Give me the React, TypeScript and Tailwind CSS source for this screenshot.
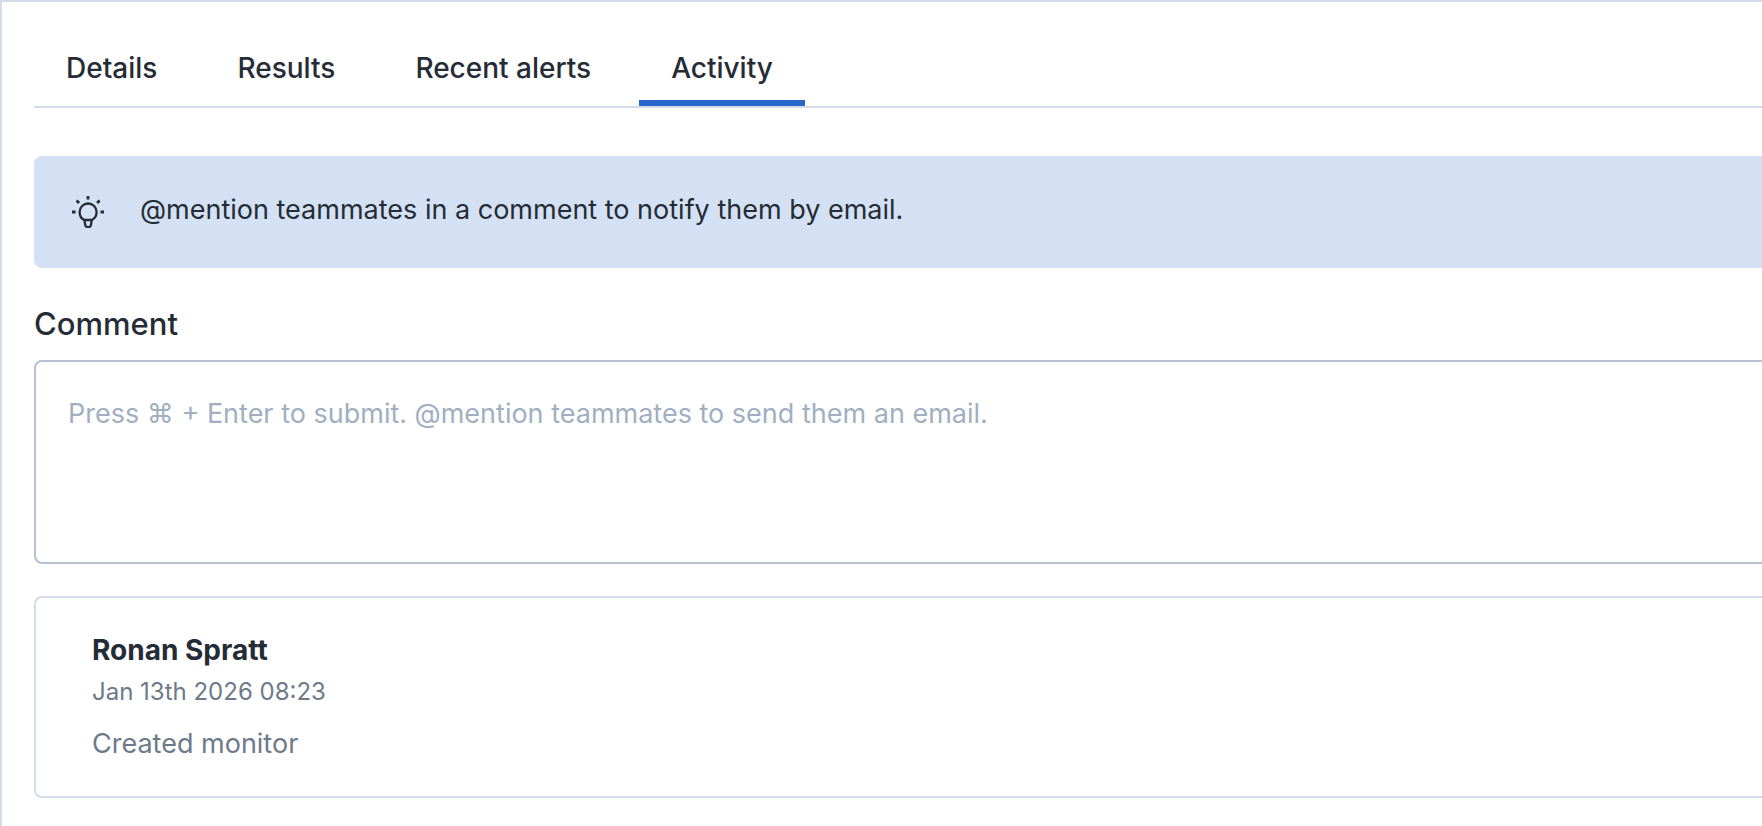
import React, { useState } from "react";

const tabs = ["Details", "Results", "Recent alerts", "Activity"];

const activity = [
  {
    author: "Ronan Spratt",
    date: "Jan 13th 2026 08:23",
    message: "Created monitor",
  },
];

const LightbulbIcon: React.FC = () => (
  <svg
    viewBox="0 0 32 32"
    className="mt-2 h-8 w-8 shrink-0"
    fill="none"
    stroke="currentColor"
    strokeWidth="2.3"
    aria-hidden="true"
  >
    <path d="M12.300 24C9.200 22.600 7.600 19.500 7.600 16a8.500 8.500 0 0 1 17 0c0 3.500-1.700 6.500-4.700 8z" />
    <path d="M12.500 24l.6 4.200a3 3 0 0 0 6 0l.6-4.200" />
    <path
      strokeWidth="2.8"
      d="M16 0v3.400M0 16h3.600M28.500 16H32M4.600 4.400l2.500 2.500M27.600 4.400l-2.500 2.500"
    />
  </svg>
);

const App: React.FC = () => {
  const [activeTab, setActiveTab] = useState("Activity");

  return (
    <main className="min-h-screen border-t-2 border-l-2 border-[#d3dce9] bg-white pt-8 pb-7 pl-8 font-['Inter',sans-serif] text-[27px] leading-10 text-[#252c35]">
      <div role="tablist" className="flex gap-4 border-b-2 border-[#d3dce9] text-[28px]">
        {tabs.map((tab) => (
          <button
            key={tab}
            role="tab"
            aria-selected={tab === activeTab}
            onClick={() => setActiveTab(tab)}
            className={`border-b-6 px-8 pt-3.5 pb-3 leading-10 font-medium whitespace-nowrap ${
              tab === activeTab ? "border-[#2866cc]" : "border-transparent"
            }`}
          >
            {tab}
          </button>
        ))}
      </div>

      <div className="mt-12 flex items-start gap-9 rounded-l-lg bg-[#d4e1f4] pt-8 pr-9 pb-9 pl-[38px]">
        <LightbulbIcon />
        <p className="leading-11">@mention teammates in a comment to notify them by email.</p>
      </div>

      <label htmlFor="comment" className="mt-9 mb-4 block text-[31px] leading-10 font-medium">
        Comment
      </label>
      <textarea
        id="comment"
        placeholder="Press ⌘ + Enter to submit. @mention teammates to send them an email."
        className="block h-51 w-full resize-none rounded-l-lg border-2 border-r-0 border-[#b6c2d2] p-8 placeholder:text-[#a1afc0] focus:outline-none"
      />

      <ul className="mt-8 flex flex-col gap-8">
        {activity.map((item) => (
          <li key={item.date} className="rounded-l-lg border-2 border-r-0 border-[#d3dce9] py-8 pr-8 pl-14">
            <h3 className="text-[28px] leading-10 font-bold">{item.author}</h3>
            <p className="text-2xl leading-11 text-[#6c7a89]">{item.date}</p>
            <p className="mt-2.5 text-[#6c7a89]">{item.message}</p>
          </li>
        ))}
      </ul>
    </main>
  );
};

export default App;
